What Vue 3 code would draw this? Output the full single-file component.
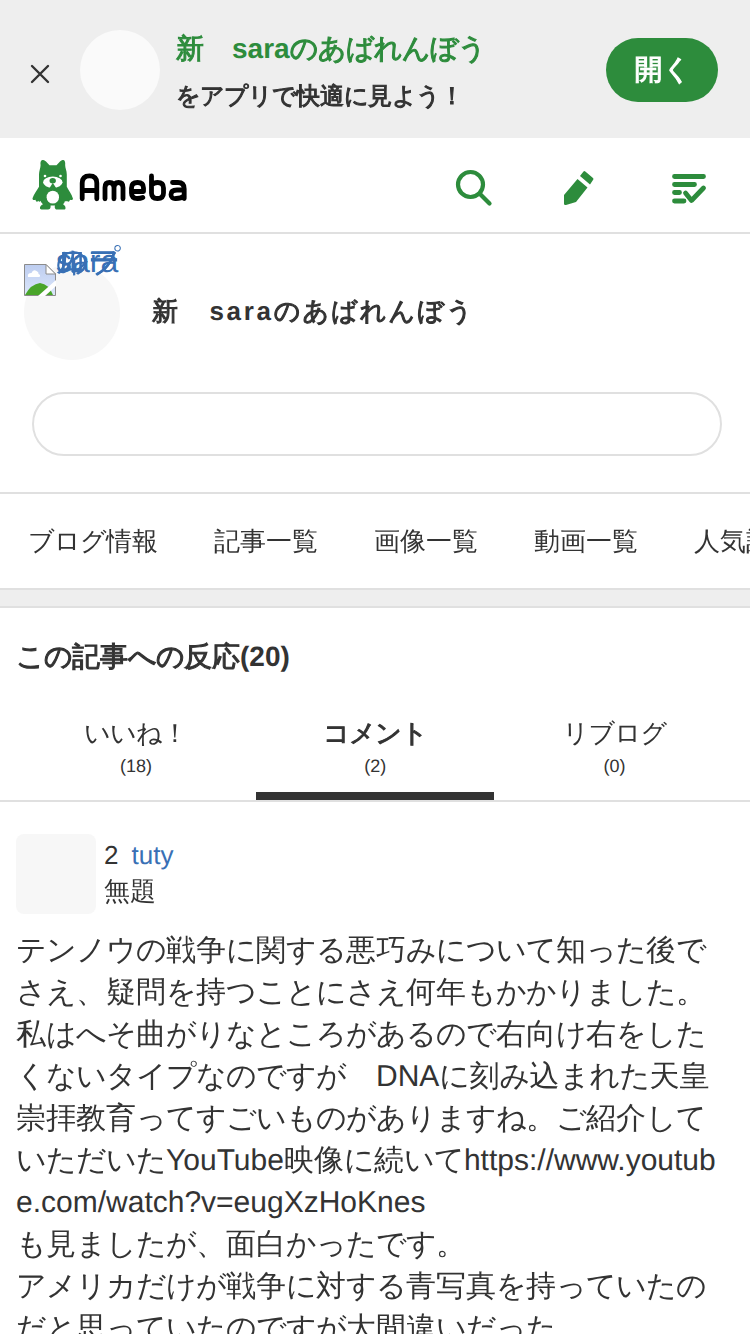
<script setup>
import { h } from 'vue'

const nav = ['ブログ情報', '記事一覧', '画像一覧', '動画一覧', '人気記事']
const tabs = [
  { label: 'いいね！', count: 18 },
  { label: 'コメント', count: 2, active: true },
  { label: 'リブログ', count: 0 },
]
const altLines = ['sara', 'のプ', 'ロフ', 'ィー', 'ル']
const lines = [
  'テンノウの戦争に関する悪巧みについて知った後で',
  'さえ、疑問を持つことにさえ何年もかかりました。',
  '私はへそ曲がりなところがあるので右向け右をした',
  'くないタイプなのですが　DNAに刻み込まれた天皇',
  '崇拝教育ってすごいものがありますね。ご紹介して',
  'いただいたYouTube映像に続いてhttps://www.youtub',
  'e.com/watch?v=eugXzHoKnes',
  'も見ましたが、面白かったです。',
  'アメリカだけが戦争に対する青写真を持っていたの',
  'だと思っていたのですが大間違いだった',
]

// Wraps kana and other Japanese runs so each can be tracked and weighted on its own.
const Jp = (props) =>
  h('span', (props.t.match(/[\u3041-\u30ff]+|[\u0020-\u007e]+|[^\u3041-\u30ff\u0020-\u007e]+/g) || []).map((run) =>
    h('span', { class: /[\u3041-\u30ff]/.test(run) ? 'kana wide' : /[ -~]/.test(run) ? '' : 'wide' }, run)))
Jp.props = ['t']
</script>

<template>
  <div class="page">
    <div class="banner">
      <svg class="close" width="20" height="20" viewBox="0 0 20 20"><path d="M2 2 18 18M18 2 2 18" /></svg>
      <span class="app-icon"></span>
      <div class="app-text">
        <p class="app-name heavy"><Jp t="新　saraのあばれんぼう" /></p>
        <p class="app-sub heavy"><Jp t="をアプリで快適に見よう！" /></p>
      </div>
      <button class="open heavy"><Jp t="開く" /></button>
    </div>

    <header class="header">
      <svg class="logo" width="160" height="54" viewBox="0 0 160 54">
        <g transform="translate(0 -2) scale(1 1.030)">
          <path class="green" d="M8.500 6C8 2 11 .5 14 3.500L17.500 7H24.500L28 3.500C31 .5 33.500 2 33.200 6C32.800 9 34.800 12 34.800 16V28C37 32 39.500 35 41 39.500C40.500 41.300 39 41 38 40.500C37.500 42.500 36 43 35 41.500C34.300 42.700 33.300 42.300 33 41.500C32.800 43 32 44 31 45C34 46.500 34.300 50 32 50H25C23 50 22.300 48 23 46H18.500C19 48 18 50 16 50H9.500C7 50 7.500 46.500 11 45C10 44 9 43 8.500 41.500C8 42.700 6.800 42.700 6.300 41.500C5.300 43 3.800 42.500 3.500 40.500C2 41 .5 41 .5 39C2 35 4.500 32 7 28V16C7 12 9 9 8.500 6Z" />
          <ellipse class="white" cx="20.800" cy="23.500" rx="9.700" ry="5.500" />
          <path class="green" d="M17 30 20.800 24 24.700 30Z" />
          <ellipse class="green" cx="20.700" cy="22" rx="3.200" ry="2.500" />
          <circle class="white" cx="13" cy="17.500" r="1.300" /><circle class="white" cx="28.500" cy="17.500" r="1.300" />
          <circle class="white" cx="20.800" cy="38" r="6.200" />
        </g>
        <g class="word">
          <path d="M50.200 38.800V23Q50.200 15.800 57.500 15.800T64.800 23V38.800M50.200 30.500H64.800" />
          <path d="M73 38.800V27.500Q73 22.500 77.500 22.500T82 27.500V38.800M82 27.500Q82 22.500 86.500 22.500T91 27.500V38.800" />
          <path d="M99.500 31.500H111.500V28Q111.500 22.500 105.500 22.500T99.500 28V33Q99.500 38.500 105.500 38.500Q108.500 38.500 110.800 37.500" />
          <path d="M119.500 16V33Q119.500 38.500 125.500 38.500T131.500 33V28Q131.500 22.500 125.500 22.500Q122 22.500 119.500 25" />
          <path d="M140.500 22.500H146Q152.200 22.500 152.200 29V38.500M152.200 30H145Q139 30 139 34.500T144 38.500Q149 38.500 152.200 36" />
        </g>
      </svg>
      <div class="tools">
        <svg width="38" height="38" viewBox="0 0 38 38"><circle class="line" cx="15.500" cy="15.500" r="12.500" /><path class="line" d="m25 25 9.500 9.500" /></svg>
        <svg width="32" height="36" viewBox="0 0 32 36"><path class="green" d="M14.500 9 24.500 17.500 13 32 3 35Q1 35.500 1 33.500V25ZM17 6 20.500 1.500Q21.300 .7 22.300 1.500L30 8Q31 9 30 10L27 14.500Z" /></svg>
        <svg class="menu" width="36" height="34" viewBox="0 0 36 34"><path class="menu-line" d="M3.500 4.500H32.500M3.500 12.500H23.500M3.500 20.500H8.500M3.500 29H13M14.500 21 20.500 28.500 32.500 16" /></svg>
      </div>
    </header>

    <section class="profile">
      <div class="avatar">
        <svg class="broken" width="32" height="32" viewBox="0 0 32 32">
          <defs>
            <linearGradient id="sky" x2="0" y2="1"><stop stop-color="#bdcdf0" /><stop offset="1" stop-color="#dce7fb" /></linearGradient>
          </defs>
          <path d="M.5.5H22L31.500 10V31.500H.5Z" fill="url(#sky)" stroke="#8b8b8b" />
          <path d="M4 13Q3 9 7.500 9Q9 5 12.500 7Q15 8 14.500 10Q17 11 15.500 13Z" fill="#fff" />
          <path d="M1 31Q7 20 16 19Q25 20 29 31Z" fill="#49a52a" />
          <path d="M14 32 32 16V22L21 32Z" fill="#fff" />
          <path d="M22 .5V10H31.500Z" fill="#fff" stroke="#8b8b8b" />
        </svg>
        <span class="alt"><Jp v-for="t in altLines" :key="t" class="alt-line" :t="t" /></span>
      </div>
      <h1 class="blog-title heavy"><Jp t="新　saraのあばれんぼう" /></h1>
    </section>
    <div class="follow-row"><div class="follow"></div></div>

    <nav class="nav"><a v-for="n in nav" :key="n"><Jp :t="n" /></a></nav>
    <div class="divider"></div>

    <main>
      <h2 class="heading heavy"><Jp t="この記事への反応(20)" /></h2>
      <div class="tabs">
        <div v-for="t in tabs" :key="t.label" class="tab" :class="{ active: t.active }">
          <span class="tab-label" :class="{ heavy: t.active }"><Jp :t="t.label" /></span>
          <span class="tab-count">({{ t.count }})</span>
        </div>
      </div>
      <article class="comment">
        <div class="comment-head">
          <span class="user-icon"></span>
          <div class="meta">
            <p><span class="num">2</span><a class="user">tuty</a></p>
            <p>無題</p>
          </div>
        </div>
        <div class="body"><p v-for="l in lines" :key="l"><Jp :t="l" /></p></div>
      </article>
    </main>
  </div>
</template>

<style>
body { margin: 0; overflow: hidden; }
.kana { letter-spacing: calc(var(--track, 0px) - .0234em); }
.heavy .wide { -webkit-text-stroke: 1.050px currentColor; }
</style>

<style scoped>
.page { width: 750px; height: 1334px; overflow: hidden; background: #fff; color: #333; font-family: "Liberation Sans", "WenQuanYi Zen Hei", "Noto Sans CJK JP", sans-serif; text-rendering: geometricPrecision; }
.page * { box-sizing: border-box; }
p, h1, h2 { margin: 0; white-space: nowrap; }
.green { fill: #2d8c3c; }
.white { fill: #fff; }
.banner { display: flex; height: 138px; background: #eee; }
.close { margin: 64px 30px 0; fill: none; stroke: #333; stroke-width: 2.400; stroke-linecap: round; }
.app-icon { width: 80px; height: 80px; margin-top: 30px; border-radius: 50%; background: #fafafa; }
.app-text { flex: 1; padding: 28px 0 0 16px; font-weight: bold; }
.app-name { font-size: 28px; line-height: 42px; color: #2d8c3c; }
.app-sub { font-size: 24px; line-height: 36px; margin-top: 9px; }
.open { width: 112px; height: 64px; margin: 38px 32px 0 0; padding: 0 0 0 1px; border: 0; border-radius: 32px; background: #2d8c3c; color: #fff; font: bold 28px/64px "Liberation Sans", "WenQuanYi Zen Hei", "Noto Sans CJK JP", sans-serif; text-rendering: geometricPrecision; }
.header { display: flex; justify-content: space-between; height: 96px; padding: 22px 43px 0 32px; border-bottom: 2px solid #e0e0e0; }
.word { fill: none; stroke: #000; stroke-width: 4.800; stroke-linecap: round; stroke-linejoin: round; }
.tools { display: flex; align-items: center; height: 56px; gap: 70px; }
.menu { margin: 2px 0 0 6px; }
.line { fill: none; stroke: #2d8c3c; stroke-width: 4.200; stroke-linecap: round; }
.menu-line { fill: none; stroke: #2d8c3c; stroke-width: 4.800; stroke-linecap: round; stroke-linejoin: round; }
.profile { display: flex; height: 126px; padding: 30px 24px 0; }
.avatar { position: relative; width: 96px; height: 96px; border-radius: 50%; background: #f7f7f7; }
.broken { display: block; }
.alt { position: absolute; left: 32px; top: -21px; display: grid; color: #3970b5; font-size: 32px; line-height: 36px; }
.alt-line { grid-area: 1 / 1; white-space: nowrap; }
.blog-title { --track: 2.700px; margin-left: 32px; font-size: 26px; line-height: 94px; letter-spacing: 2.700px; }
.follow-row { height: 134px; padding: 32px 28px 0 32px; border-bottom: 2px solid #e0e0e0; }
.follow { height: 64px; border: 2px solid #e0e0e0; border-radius: 32px; }
.nav { display: flex; gap: 56px; height: 94px; padding-left: 28px; overflow: hidden; font-size: 26px; line-height: 94px; white-space: nowrap; }
.divider { height: 20px; border: solid #e0e0e0; border-width: 2px 0; background: #eee; }
.heading { height: 96px; padding-left: 16px; font-size: 28px; line-height: 98px; }
.tabs { display: grid; grid-template-columns: repeat(3, 238px); column-gap: 1.300px; height: 98px; padding-left: 17px; border-bottom: 2px solid #e0e0e0; }
.tab { display: flex; flex-direction: column; align-items: center; padding-top: 10px; }
.tab-label { font-size: 26px; line-height: 38px; }
.tab-count { font-size: 18px; line-height: 28px; }
.active { border-bottom: 8px solid #333; }
.active .tab-label { font-weight: bold; }
.comment { padding: 32px 16px 0; }
.comment-head { display: flex; height: 80px; }
.user-icon { width: 80px; border-radius: 8px; background: #f7f7f7; }
.meta { padding: 3px 0 0 8px; font-size: 26px; line-height: 36px; }
.num { margin-right: 13px; }
.user { color: #3970b5; }
.body { margin-top: 16px; font-size: 30px; line-height: 42px; }
</style>
